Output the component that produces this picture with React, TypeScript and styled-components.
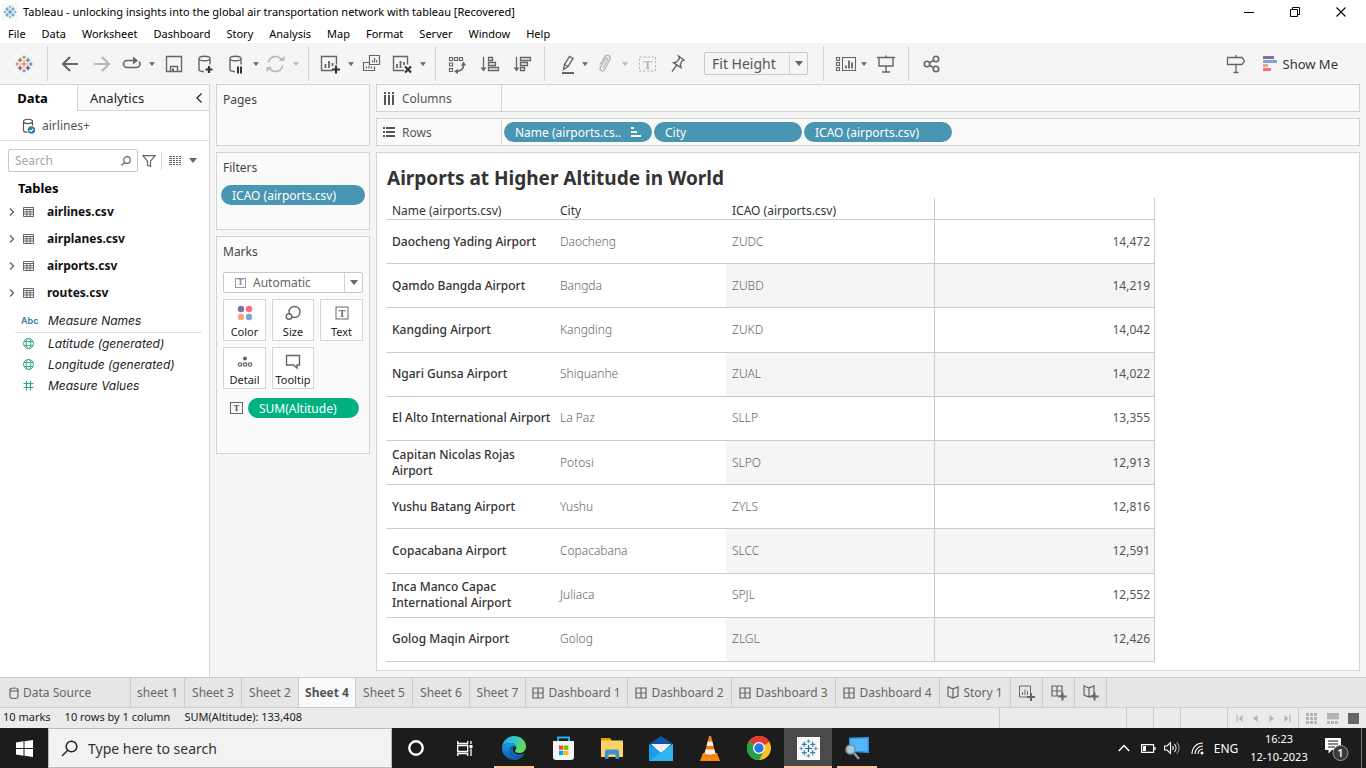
import React from "react";
import styled, { createGlobalStyle, css } from "styled-components";

const sys = `"Noto Sans", "Open Sans", sans-serif`;
const tab = `"Noto Sans", "Open Sans", sans-serif`;
const line = "#d4d4d4";
const teal = "#4996b2";

const GlobalStyle = createGlobalStyle`
  *, *::before, *::after { box-sizing: border-box; }
  body { margin: 0; background: #f5f5f5; font-family: ${tab}; font-size: 12px; color: #333; }
  button, input, select { font: inherit; color: inherit; margin: 0; padding: 0; border: 0; background: none; border-radius: 0; }
  h1, h2, ul { margin: 0; padding: 0; list-style: none; }
  svg { display: block; flex: none; }
`;

const Page = styled.div`
  min-height: 100vh;
  display: flex;
  flex-direction: column;
`;

/* ---------- window chrome ---------- */
const TitleBar = styled.header`
  display: flex;
  align-items: center;
  height: 23px;
  padding: 0 2px;
  background: #fff;
  font-family: ${sys};
  font-size: 11px;
  color: #000;
`;
const WindowTitle = styled.span`
  flex: 1;
  margin-left: 5px;
  white-space: nowrap;
`;
const WindowButton = styled.button`
  width: 46px;
  height: 23px;
  display: flex;
  align-items: center;
  justify-content: center;
`;
const MenuBar = styled.nav`
  display: flex;
  align-items: center;
  height: 20px;
  padding-left: 8px;
  gap: 16px;
  background: #fff;
  font-family: ${sys};
  font-size: 11px;
  color: #000;
`;
const Toolbar = styled.div`
  display: flex;
  align-items: center;
  height: 41px;
  color: #666;
`;
const ToolButton = styled.button<{ $w?: number; $off?: boolean }>`
  width: ${(p) => p.$w ?? 32}px;
  height: 32px;
  display: flex;
  flex: none;
  align-items: center;
  justify-content: center;
  color: ${(p) => (p.$off ? "#b8b8b8" : "#666")};
`;
const StartPageButton = styled(ToolButton)`
  width: 41px;
  padding-left: 6px;
`;
const ToolSep = styled.span`
  width: 1px;
  height: 35px;
  margin: 0 6px;
  background: ${line};
`;
const Spacer = styled.span`
  flex: 1;
`;
const ShowMe = styled.button`
  display: flex;
  align-items: center;
  gap: 6px;
  margin: 0 28px 0 11px;
  font-size: 13px;
  color: #333;
`;

const Combo = styled.div<{ $kind: "fit" | "mark" }>`
  display: grid;
  align-items: stretch;
  border: 1px solid #c8c8c8;
  border-radius: 2px;
  ${(p) =>
    p.$kind === "fit"
      ? css`
          width: 104px;
          height: 23px;
          margin: 0 9px;
          font-size: 14px;
          color: #555;
        `
      : css`
          height: 21px;
          background: #fff;
          font-size: 12px;
          color: #666;
        `}
  select {
    grid-area: 1 / 1;
    appearance: none;
    width: 100%;
    padding-left: ${(p) => (p.$kind === "fit" ? 7 : 29)}px;
  }
`;
const ComboIcon = styled.span`
  grid-area: 1 / 1;
  display: flex;
  align-items: center;
  padding-left: 11px;
  pointer-events: none;
`;
const ComboArrow = styled.span`
  grid-area: 1 / 1;
  justify-self: end;
  width: 18px;
  display: flex;
  align-items: center;
  justify-content: center;
  border-left: 1px solid ${line};
  color: #666;
  pointer-events: none;
`;

/* ---------- workspace ---------- */
const Workspace = styled.main`
  flex: 1;
  display: flex;
  align-items: stretch;
`;
const DataPane = styled.aside`
  width: 210px;
  flex: none;
  background: #fff;
  border-top: 1px solid ${line};
  border-right: 1px solid ${line};
`;
const PaneTabs = styled.div`
  display: flex;
  height: 26px;
`;
const PaneTab = styled.button<{ $active?: boolean }>`
  font-size: 13px;
  color: #222;
  ${(p) =>
    p.$active
      ? css`
          width: 78px;
          padding-right: 12px;
          font-weight: 700;
          color: #000;
          border-right: 1px solid ${line};
        `
      : css`
          flex: 1;
          display: flex;
          align-items: center;
          justify-content: space-between;
          padding: 0 6px 0 12px;
          background: #fafafa;
          border-bottom: 1px solid ${line};
        `}
`;
const SourceRow = styled.button`
  display: flex;
  align-items: center;
  gap: 6px;
  width: 100%;
  height: 30px;
  padding-left: 22px;
  color: #555;
  border-bottom: 1px solid #e2e2e2;
`;
const SearchRow = styled.div`
  display: flex;
  align-items: center;
  padding: 8px 8px 0;
  color: #666;
`;
const SearchBox = styled.label`
  display: flex;
  align-items: center;
  width: 130px;
  height: 23px;
  padding: 0 6px;
  border: 1px solid #c8c8c8;
  border-radius: 2px;
  input {
    flex: 1;
    min-width: 0;
    outline: 0;
  }
  input::placeholder {
    color: #a6a6a6;
    opacity: 1;
  }
`;
const SmallTool = styled.button<{ $w: number }>`
  width: ${(p) => p.$w}px;
  height: 20px;
  display: flex;
  align-items: center;
  justify-content: center;
`;
const ThinSep = styled.span`
  width: 1px;
  height: 18px;
  margin-left: 2px;
  background: ${line};
`;
const PaneHeading = styled.h2`
  padding: 6px 18px 0;
  font-size: 13px;
  line-height: 20px;
  font-weight: 700;
  color: #000;
`;
const TableList = styled.div`
  margin-bottom: 4px;
`;
const TableItem = styled.button`
  display: grid;
  grid-template-columns: 15px 24px 1fr;
  align-items: center;
  width: 100%;
  height: 27px;
  padding-left: 8px;
  text-align: left;
  font-weight: 700;
  color: #111;
  svg { color: #666; }
`;
const FieldItem = styled.button`
  display: grid;
  grid-template-columns: 28px 1fr;
  align-items: center;
  width: 100%;
  height: 21px;
  padding-left: 20px;
  text-align: left;
  font-family: Inter, ${tab};
  font-style: italic;
  color: #222;
`;
const FieldType = styled.span<{ $kind: "text" | "icon" }>`
  display: flex;
  padding-left: ${(p) => (p.$kind === "text" ? 1 : 3)}px;
  font-size: 9px;
  font-style: normal;
  font-weight: 600;
  color: ${(p) => (p.$kind === "text" ? "#3e7b96" : "#3aa981")};
`;
const FieldRule = styled.hr`
  margin: 1px 7px 0 15px;
  border: 0;
  border-top: 1px solid #e0e0e0;
`;

const Cards = styled.div`
  width: 154px;
  flex: none;
  margin-left: 6px;
  display: flex;
  flex-direction: column;
  gap: 6px;
`;
const Card = styled.section<{ $h: number }>`
  min-height: ${(p) => p.$h}px;
  padding: 6px;
  background: #fafafa;
  border: 1px solid ${line};
`;
const CardTitle = styled.h2`
  font-size: 12px;
  line-height: 18px;
  font-weight: 400;
  color: #444;
`;
const Pill = styled.button<{ $w: number; $green?: boolean }>`
  display: flex;
  align-items: center;
  justify-content: space-between;
  width: ${(p) => p.$w}px;
  height: 20px;
  flex: none;
  padding: 0 11px;
  border-radius: 10px;
  background: ${(p) => (p.$green ? "#00b180" : teal)};
  color: #fff;
  white-space: nowrap;
`;
const FilterSlot = styled.div`
  margin: 8px -2px 0;
`;
const MarksBody = styled.div`
  margin-top: 11px;
`;
const MarkGrid = styled.div`
  display: grid;
  grid-template-columns: 43px 42px 43px;
  gap: 6px;
  margin-top: 6px;
`;
const MarkButton = styled.button`
  height: 42px;
  display: flex;
  flex-direction: column;
  align-items: center;
  justify-content: space-between;
  padding-top: 4px;
  background: #fff;
  border: 1px solid ${line};
  font-size: 11px;
  line-height: 16px;
  color: #222;
  svg { color: #666; }
`;
const MarkField = styled.div`
  display: flex;
  align-items: center;
  gap: 5px;
  margin: 9px 0 0 7px;
  color: #666;
`;

const Sheet = styled.div`
  flex: 1;
  min-width: 0;
  display: flex;
  flex-direction: column;
  gap: 6px;
  padding: 0 6px 6px;
`;
const Shelf = styled.div`
  display: flex;
  align-items: center;
  gap: 2px;
  height: 28px;
  background: #fafafa;
  border: 1px solid ${line};
`;
const ShelfName = styled.div`
  display: flex;
  align-items: center;
  gap: 6px;
  width: 125px;
  height: 100%;
  padding-left: 6px;
  border-right: 1px solid ${line};
  color: #555;
`;
const View = styled.section`
  flex: 1;
  padding: 10px 9px 8px;
  background: #fff;
  border: 1px solid ${line};
`;
const ViewTitle = styled.h1`
  padding-left: 1px;
  font-size: 19px;
  line-height: 30px;
  font-weight: 700;
  color: #333;
`;
const Grid = styled.table`
  width: 769px;
  height: 464px;
  margin-top: 5px;
  table-layout: fixed;
  border-collapse: separate;
  border-spacing: 0;
  th, td {
    padding: 0 6px;
    text-align: left;
    font-weight: 400;
    line-height: 16px;
    border-bottom: 1px solid #ccc;
  }
  thead th { height: 22px; padding-top: 4px; color: #333; }
  tbody tr { height: 44px; }
  tbody th { padding-right: 0; font-weight: 500; color: #333; }
  td { color: #666; font-weight: 300; }
  th:nth-child(3), td:nth-child(3) { border-right: 1px solid #ccc; }
  th:nth-child(4), td:nth-child(4) { border-right: 1px solid #ccc; padding-right: 4px; text-align: right; color: #555; font-weight: 400; }
  tbody tr:nth-child(even) td:nth-child(n + 3) { background: #f5f5f5; }
`;

/* ---------- sheet tabs and status ---------- */
const SheetTabs = styled.nav`
  display: flex;
  height: 31px;
  background: #e6e6e6;
  border-top: 1px solid #ccc;
  border-bottom: 1px solid #ccc;
`;
const SheetTab = styled.button<{ $w: number; $active?: boolean; $first?: boolean }>`
  width: ${(p) => p.$w}px;
  display: flex;
  align-items: center;
  justify-content: ${(p) => (p.$first ? "flex-start" : "center")};
  gap: 4px;
  padding-left: ${(p) => (p.$first ? 9 : 0)}px;
  border-right: 1px solid #ccc;
  background: ${(p) => (p.$active ? "#fafafa" : "transparent")};
  font-weight: ${(p) => (p.$active ? 700 : 400)};
  color: ${(p) => (p.$active ? "#555" : "#666")};
  white-space: nowrap;
`;
const StatusBar = styled.footer`
  display: flex;
  align-items: center;
  height: 20px;
  padding-left: 3px;
  background: #ebebeb;
  font-size: 11px;
  color: #222;
`;
const StatusText = styled.span`
  margin-right: 14px;
  line-height: 18px;
  padding-bottom: 2px;
`;
const StatusCell = styled.div<{ $w: number }>`
  width: ${(p) => p.$w}px;
  height: 100%;
  display: flex;
  align-items: center;
  justify-content: center;
  gap: 9px;
  border-left: 1px solid #ccc;
  color: #b4b4b4;
`;

/* ---------- taskbar ---------- */
const Taskbar = styled.footer`
  display: flex;
  align-items: stretch;
  height: 40px;
  background: #1c1c1c;
  color: #fff;
  font-family: ${sys};
`;
const TaskButton = styled.button<{ $open?: boolean; $active?: boolean }>`
  width: 48px;
  margin-right: 1px;
  display: flex;
  align-items: center;
  justify-content: center;
  background: ${(p) =>
    p.$active
      ? "linear-gradient(#fcc4a0, #fcc4a0) bottom / 100% 2px no-repeat #4a4a4a"
      : p.$open
        ? "linear-gradient(#fcc4a0, #fcc4a0) bottom / 40px 2px no-repeat"
        : "none"};
`;
const StartButton = styled(TaskButton)`
  margin: 0;
`;
const TaskSearch = styled.label`
  display: flex;
  align-items: center;
  gap: 10px;
  width: 344px;
  padding-left: 12px;
  background: #f2f2f2;
  border: 1px solid #bbb;
  color: #222;
  font-size: 14px;
  input { flex: 1; outline: 0; }
  input::placeholder { color: #333; opacity: 1; }
`;
const TrayButton = styled.button<{ $w: number }>`
  width: ${(p) => p.$w}px;
  display: flex;
  align-items: center;
  justify-content: center;
  font-size: 12px;
`;
const Clock = styled.button`
  width: 74px;
  font-size: 11px;
  line-height: 18px;
`;
const Notify = styled.button`
  width: 46px;
  margin-right: 4px;
  border-right: 1px solid #777;
  display: flex;
  align-items: center;
  padding-left: 7px;
`;

/* ---------- drawings ---------- */
type IconProps = { w?: number; h?: number; sw?: number; children: React.ReactNode };
const Icon = ({ w = 32, h = 32, sw = 1.4, children }: IconProps) => (
  <svg width={w} height={h} viewBox={`0 0 ${w} ${h}`} fill="none" stroke="currentColor" strokeWidth={sw} aria-hidden="true">
    {children}
  </svg>
);
const Caret = ({ w = 6 }: { w?: number }) => (
  <svg width={w} height={w === 6 ? 4 : 5} viewBox="0 0 8 5" aria-hidden="true">
    <path d="M0 0h8L4 5z" fill="currentColor" />
  </svg>
);
const logoMarks: [number, number, number, string, string][] = [
  [10, 10, 3.6, "#e8762c", "#1f6a96"],
  [5.6, 5.6, 2.6, "#c8553d", "#3a82ab"],
  [14.4, 5.6, 2.6, "#59879b", "#3a82ab"],
  [5.6, 14.4, 2.6, "#c72035", "#3a82ab"],
  [14.4, 14.4, 2.6, "#1f447e", "#3a82ab"],
  [10, 2.4, 1.9, "#7199a6", "#5a9dc0"],
  [10, 17.6, 1.9, "#7f8fb0", "#5a9dc0"],
  [2.4, 10, 1.9, "#7199a6", "#5a9dc0"],
  [17.6, 10, 1.9, "#5b6591", "#5a9dc0"],
];
const TableauMark = ({ size, blue, plate }: { size: number; blue?: boolean; plate?: boolean }) => (
  <svg width={size} height={size} viewBox={plate ? "-2 -2 24 24" : "0 0 20 20"} aria-hidden="true">
    {plate && <rect x="-2" y="-2" width="24" height="24" fill="#f6f8fa" />}
    {logoMarks.map(([x, y, r, c, b]) => (
      <path key={`${x}-${y}`} d={`M${x - r} ${y}h${r * 2}M${x} ${y - r}v${r * 2}`} stroke={blue ? b : c} strokeWidth="1.3" />
    ))}
  </svg>
);
const TextMark = ({ w, h, faded }: { w: number; h: number; faded?: boolean }) => (
  <svg width={w} height={h} viewBox={`0 0 ${w} ${h}`} aria-hidden="true" opacity={faded ? 0.65 : 1}>
    <rect x="0.5" y="0.5" width={w - 1} height={h - 1} fill="none" stroke="#666" />
    <text x={w / 2} y={h - 3} textAnchor="middle" fontFamily="Liberation Serif, serif" fontWeight="700" fontSize="9" fill="#555">T</text>
  </svg>
);
const Cylinder = ({ x }: { x: number }) => (
  <path d={`M${x} 10.5c0-3 11-3 11 0s-11 3-11 0v11c0 1.5 2 2 5 2.2M${x + 11} 10.5v6`} />
);
const Plus = ({ x, y, r = 3.5 }: { x: number; y: number; r?: number }) => (
  <path d={`M${x - r} ${y}h${r * 2}M${x} ${y - r}v${r * 2}`} stroke="#333" strokeWidth="2.2" />
);
const Chevron = () => (
  <Icon w={7} h={10} sw={1.4}><path d="M2 1.5 5.5 5 2 8.500" /></Icon>
);
const TableIcon = () => (
  <Icon w={11} h={10} sw={1}><path d="M.5.5h10v9H.5zM.5 2.5h10M.5 4.800h10M.5 7h10M3.800 2.500v7M7.100 2.500v7" /></Icon>
);
const Globe = () => (
  <Icon w={11} h={11} sw={1}>
    <circle cx="5.5" cy="5.5" r="5" />
    <ellipse cx="5.5" cy="5.5" rx="2.3" ry="5" />
    <path d="M1 3.6h9M1 7.4h9" />
  </Icon>
);
const Hash = () => (
  <Icon w={11} h={11} sw={1.2}><path d="M3.5 1v9.500M7.500 1v9.500M.5 3.500h10M.5 7.500h10" /></Icon>
);
const DashIcon = ({ plus }: { plus?: boolean }) => (
  <Icon w={plus ? 16 : 12} h={plus ? 16 : 12} sw={1.2}>
    <path d="M1 1h10v10H1zM6 1v10M1 6h10" />
    {plus && <path d="M7.500 11.500h8M11.500 7.500v8" strokeWidth="2" />}
  </Icon>
);
const StoryIcon = ({ plus }: { plus?: boolean }) => (
  <Icon w={plus ? 16 : 12} h={plus ? 16 : 13} sw={1.2}>
    <path d="M6 3 1 1v9l5 2 5-2V1L6 3v9" />
    {plus && <path d="M7.500 11.500h8M11.500 7.500v8" strokeWidth="2" />}
  </Icon>
);
const SheetPlus = () => (
  <Icon w={16} h={16} sw={1}>
    <path d="M.5 1h11v11H.5zM3.500 10V7M6 10V4.500M8.500 10V6" />
    <path d="M8 12h8M12 8v8" strokeWidth="2" />
  </Icon>
);
const ToolCaret = ({ label, off }: { label: string; off?: boolean }) => (
  <ToolButton $w={12} $off={off} aria-label={label}><Caret /></ToolButton>
);

/* ---------- data ---------- */
const menus = ["File", "Data", "Worksheet", "Dashboard", "Story", "Analysis", "Map", "Format", "Server", "Window", "Help"];
const tables = ["airlines.csv", "airplanes.csv", "airports.csv", "routes.csv"];
const airports = [
  ["Daocheng Yading Airport", "Daocheng", "ZUDC", "14,472"],
  ["Qamdo Bangda Airport", "Bangda", "ZUBD", "14,219"],
  ["Kangding Airport", "Kangding", "ZUKD", "14,042"],
  ["Ngari Gunsa Airport", "Shiquanhe", "ZUAL", "14,022"],
  ["El Alto International Airport", "La Paz", "SLLP", "13,355"],
  ["Capitan Nicolas Rojas Airport", "Potosi", "SLPO", "12,913"],
  ["Yushu Batang Airport", "Yushu", "ZYLS", "12,816"],
  ["Copacabana Airport", "Copacabana", "SLCC", "12,591"],
  ["Inca Manco Capac International Airport", "Juliaca", "SPJL", "12,552"],
  ["Golog Maqin Airport", "Golog", "ZLGL", "12,426"],
];
const sheetTabs: [string, number][] = [
  ["sheet 1", 54], ["Sheet 3", 57], ["Sheet 2", 57], ["Sheet 4", 57], ["Sheet 5", 57], ["Sheet 6", 57], ["Sheet 7", 56],
];
const dashTabs: [string, number][] = [
  ["Dashboard 1", 102], ["Dashboard 2", 104], ["Dashboard 3", 104], ["Dashboard 4", 104],
];

const MainToolbar = () => (
  <Toolbar>
    <StartPageButton aria-label="Start page"><TableauMark size={18} /></StartPageButton>
    <ToolSep />
    <ToolButton aria-label="Undo"><Icon sw={2}><path d="M24 16H9M16 9l-7 7 7 7" /></Icon></ToolButton>
    <ToolButton $off aria-label="Redo"><Icon sw={2}><path d="M8 16h15M16 9l7 7-7 7" /></Icon></ToolButton>
    <ToolButton $w={28} aria-label="Replay">
      <Icon w={28} sw={1.6}>
        <path d="M16 12.500H9a3.500 3.500 0 0 0 0 7h9.500a3.500 3.500 0 0 0 3.500-3.500c0-1-.3-1.800-1-2.500" />
        <path d="M15 8.500l5 4-5 4z" fill="currentColor" stroke="none" />
      </Icon>
    </ToolButton>
    <ToolCaret label="Replay options" />
    <ToolButton aria-label="Save">
      <Icon><path d="M8.500 8.500h15v15h-15zM12.500 23.500v-5h7v5" /><path d="M14 20.500h2v3h-2z" fill="currentColor" stroke="none" /></Icon>
    </ToolButton>
    <ToolButton aria-label="New data source"><Icon><Cylinder x={9} /><Plus x={19} y={21.500} /></Icon></ToolButton>
    <ToolButton $w={28} aria-label="Pause auto updates">
      <Icon w={28}><Cylinder x={8} /><path d="M16 18.500v7M19 18.500v7" stroke="#333" strokeWidth="2" /></Icon>
    </ToolButton>
    <ToolCaret label="Auto update options" />
    <ToolButton $w={28} $off aria-label="Run update">
      <Icon w={28} sw={1.600}>
        <path d="M6.500 14.500a7 7 0 0 1 13-2.500M20.500 17.500a7 7 0 0 1-13 2.500" />
        <path d="M17 13h5.500V8zM10 19H4.500v5z" fill="currentColor" stroke="none" />
      </Icon>
    </ToolButton>
    <ToolCaret label="Update options" off />
    <ToolSep />
    <ToolButton $w={30} aria-label="New worksheet">
      <Icon w={30}>
        <path d="M17.500 22.500H6.500v-14h15v8" />
        <path d="M10.500 20v-4M14 20v-7M17.500 18v-3" strokeWidth="1.800" />
        <Plus x={21} y={21.500} r={4} />
      </Icon>
    </ToolButton>
    <ToolCaret label="New worksheet options" />
    <ToolButton aria-label="Duplicate">
      <Icon sw={1.200}>
        <path d="M12 14.500H6.500v8h11v-4M12.500 7.500h10v9h-10zM15.500 14.500v-2M17.500 14.500V10M19.500 14.500V12M9.500 20.500v-2M12 20.500v-3M14.500 20.500v-2" />
      </Icon>
    </ToolButton>
    <ToolButton $w={28} aria-label="Clear sheet">
      <Icon w={28}>
        <path d="M15 22.500H4.500v-14h14v8" />
        <path d="M8 20v-4M11.500 20v-7M15 17v-3" strokeWidth="1.800" />
        <path d="M16 18.500l6 6M22 18.500l-6 6" stroke="#333" strokeWidth="2.200" />
      </Icon>
    </ToolButton>
    <ToolCaret label="Clear options" />
    <ToolSep />
    <ToolButton aria-label="Swap rows and columns">
      <Icon sw={1.200}>
        <path d="M7.500 9.500h3v3h-3zM12.500 9.500h3v3h-3zM17.500 9.500h3v3h-3zM7.500 15h3v3h-3zM7.500 20.500h3v3h-3z" />
        <path d="M21.500 17c0 4-2 6-7 6.500" strokeWidth="1.600" />
        <path d="M21.500 13.500l2.700 4h-5.400zM12 23.500l4-2.700v5.200z" fill="currentColor" stroke="none" />
      </Icon>
    </ToolButton>
    <ToolButton aria-label="Sort ascending">
      <Icon sw={1.300}>
        <path d="M9.500 9v12M14.500 9.500h4v3h-4zM14.500 14.500h7v3h-7zM14.500 19.500h10v3h-10z" />
        <path d="M9.500 23.500l-3-4h6z" fill="currentColor" stroke="none" />
      </Icon>
    </ToolButton>
    <ToolButton aria-label="Sort descending">
      <Icon sw={1.300}>
        <path d="M10.500 9v12M14.500 9.500h10v3h-10zM14.500 14.500h7v3h-7zM14.500 19.500h4v3h-4z" />
        <path d="M10.500 23.500l-3-4h6z" fill="currentColor" stroke="none" />
      </Icon>
    </ToolButton>
    <ToolSep />
    <ToolButton $w={28} aria-label="Highlight">
      <Icon w={28}>
        <path d="M12.500 21.500l1-5 5-8 3.500 2-5 8zM13.500 16.500l3.500 2" />
        <path d="M11 25h12" strokeWidth="2" />
      </Icon>
    </ToolButton>
    <ToolCaret label="Highlight options" />
    <ToolButton $w={28} $off aria-label="Group members">
      <Icon w={28}>
        <path d="M12 20l4.500-8c1-1.800-1.200-3-2.200-1.200L9.500 19c-1.500 3 2 5.500 4 2.500l5.300-9.500c2-4-3-6.500-5-3.200L9 16.500" />
      </Icon>
    </ToolButton>
    <ToolCaret label="Group options" off />
    <ToolButton $off aria-label="Show mark labels">
      <Icon>
        <rect x="8.500" y="9" width="16" height="14" strokeDasharray="2.500 1.500" strokeWidth="1" />
        <text x="16.500" y="20.500" textAnchor="middle" fontFamily="Liberation Serif, serif" fontWeight="700" fontSize="13" fill="currentColor" stroke="none">T</text>
      </Icon>
    </ToolButton>
    <ToolButton aria-label="Fix axes">
      <Icon><path d="M15.500 8l5.500 4-2 .8-1.500 3.700.5 3.200-7.500-5 3-.8 3-3.200zM13.500 17.500L9 23.500" /></Icon>
    </ToolButton>
    <Combo $kind="fit">
      <select aria-label="Fit"><option>Fit Height</option></select>
      <ComboArrow><Caret w={8} /></ComboArrow>
    </Combo>
    <ToolSep />
    <ToolButton $w={28} aria-label="Show/hide cards">
      <Icon w={28}>
        <path d="M6.500 9.500h3v3h-3zM6.500 14.500h3v3h-3zM6.500 19.500h3v3h-3zM12.500 9.500h13v13h-13z" strokeWidth="1.100" />
        <path d="M16 20.500v-3M19 20.500v-8M22 20.500v-6" strokeWidth="1.800" />
      </Icon>
    </ToolButton>
    <ToolCaret label="Card options" />
    <ToolButton aria-label="Presentation mode">
      <Icon><path d="M7 9.500h18M9 9.500v8.500h14V9.500M16 7.500v2M16 18v6M12 24h8" /></Icon>
    </ToolButton>
    <ToolSep />
    <ToolButton aria-label="Share">
      <Icon sw={1.600}><circle cx="12" cy="16" r="2.700" /><circle cx="21" cy="11" r="2.700" /><circle cx="21" cy="21" r="2.700" /><path d="M14.500 14.700l4-2.300M14.500 17.300l4 2.300" /></Icon>
    </ToolButton>
    <Spacer />
    <ToolButton aria-label="Guide">
      <Icon sw={1.300}><path d="M7.500 9.500h14.500l2.500 3.500-2.500 3.500H7.500zM16 7v2.500M16 16.500V24M13.500 24.500h5" /></Icon>
    </ToolButton>
    <ShowMe>
      <svg width="14" height="15" viewBox="0 0 14 15" aria-hidden="true">
        <path d="M0 0h11v3H0z" fill="#85709c" /><path d="M0 4h14v3H0z" fill="#7ea4cf" />
        <path d="M0 8h5v3H0z" fill="#f4a582" /><path d="M0 12h8v3H0z" fill="#fb6b80" />
      </svg>
      Show Me
    </ShowMe>
  </Toolbar>
);

const DataSide = () => (
  <DataPane>
    <PaneTabs>
      <PaneTab $active>Data</PaneTab>
      <PaneTab>Analytics<Icon w={8} h={12} sw={1.200}><path d="M6.500 1.500 2 6l4.500 4.500" /></Icon></PaneTab>
    </PaneTabs>
    <SourceRow>
      <Icon w={14} h={16} sw={1.200}>
        <path d="M1.500 3.500c0-3 9-3 9 0s-9 2.500-9 0v9c0 1 1.500 1.700 4 1.800M10.500 3.500v4" />
        <circle cx="9.500" cy="12" r="3.700" fill="#2f7f9f" stroke="none" />
        <path d="M7.700 12l1.300 1.400 2.300-2.600" stroke="#fff" />
      </Icon>
      airlines+
    </SourceRow>
    <SearchRow>
      <SearchBox>
        <input type="text" placeholder="Search" aria-label="Search fields" />
        <Icon w={10} h={10} sw={1.200}><circle cx="6" cy="4" r="3.300" /><path d="M3.500 6.500.5 9.500" /></Icon>
      </SearchBox>
      <SmallTool $w={21} aria-label="Filter fields"><Icon w={14} h={12} sw={1.200}><path d="M1 .7h12L8.500 6.200v5l-3-1v-4z" /></Icon></SmallTool>
      <ThinSep />
      <SmallTool $w={25} aria-label="View as list">
        <Icon w={12} h={11} sw={1}><path d="M0 1.500h12M0 3.500h12M0 5.500h12M0 7.500h12M0 9.500h12" strokeDasharray="3 1 2 1 2 1 2 0" /></Icon>
      </SmallTool>
      <SmallTool $w={12} aria-label="List options"><Caret w={8} /></SmallTool>
    </SearchRow>
    <PaneHeading>Tables</PaneHeading>
    <TableList>
      {tables.map((t) => (
        <TableItem key={t}><Chevron /><TableIcon />{t}</TableItem>
      ))}
    </TableList>
    <FieldItem><FieldType $kind="text">Abc</FieldType>Measure Names</FieldItem>
    <FieldRule />
    <FieldItem><FieldType $kind="icon"><Globe /></FieldType>Latitude (generated)</FieldItem>
    <FieldItem><FieldType $kind="icon"><Globe /></FieldType>Longitude (generated)</FieldItem>
    <FieldItem><FieldType $kind="icon"><Hash /></FieldType>Measure Values</FieldItem>
  </DataPane>
);

const CardColumn = () => (
  <Cards>
    <Card $h={62}><CardTitle>Pages</CardTitle></Card>
    <Card $h={78}>
      <CardTitle>Filters</CardTitle>
      <FilterSlot><Pill $w={144}>ICAO (airports.csv)</Pill></FilterSlot>
    </Card>
    <Card $h={218}>
      <CardTitle>Marks</CardTitle>
      <MarksBody>
        <Combo $kind="mark">
          <select aria-label="Mark type"><option>Automatic</option></select>
          <ComboIcon><TextMark w={11} h={10} faded /></ComboIcon>
          <ComboArrow><Caret w={8} /></ComboArrow>
        </Combo>
        <MarkGrid>
          <MarkButton>
            <svg width="18" height="18" viewBox="0 0 18 18" aria-hidden="true">
              <circle cx="5" cy="5" r="3.200" fill="#85709c" /><circle cx="13" cy="5" r="3.200" fill="#fb6b80" />
              <circle cx="5" cy="13" r="3.200" fill="#f4a582" /><circle cx="13" cy="13" r="3.200" fill="#7ea4cf" />
            </svg>
            Color
          </MarkButton>
          <MarkButton><Icon w={18} h={18}><circle cx="10.500" cy="8" r="5.500" /><circle cx="5" cy="12.500" r="2.800" fill="#fff" /></Icon>Size</MarkButton>
          <MarkButton><Icon w={18} h={18} sw={1}>
            <rect x="3" y="3" width="12" height="12" />
            <text x="9" y="12.500" textAnchor="middle" fontFamily="Liberation Serif, serif" fontWeight="700" fontSize="10" fill="currentColor" stroke="none">T</text>
          </Icon>Text</MarkButton>
          <MarkButton><Icon w={18} h={18} sw={1.200}><circle cx="9" cy="6.500" r="2" fill="currentColor" stroke="none" /><circle cx="4" cy="12.500" r="1.700" /><circle cx="9" cy="12.500" r="1.700" /><circle cx="14" cy="12.500" r="1.700" /></Icon>Detail</MarkButton>
          <MarkButton><Icon w={18} h={18}><path d="M2.500 3.500h13v9.500h-2.500v3l-3.500-3h-7z" /></Icon>Tooltip</MarkButton>
        </MarkGrid>
        <MarkField><TextMark w={13} h={12} /><Pill $w={111} $green>SUM(Altitude)</Pill></MarkField>
      </MarksBody>
    </Card>
  </Cards>
);

const SheetArea = () => (
  <Sheet>
    <Shelf>
      <ShelfName>
        <Icon w={13} h={13} sw={2}><path d="M2 0v2M6 0v2M10 0v2M2 3v10M6 3v10M10 3v10" /></Icon>Columns
      </ShelfName>
    </Shelf>
    <Shelf>
      <ShelfName>
        <Icon w={13} h={13} sw={2}><path d="M0 2h2M0 6h2M0 10h2M3 2h9M3 6h9M3 10h9" /></Icon>Rows
      </ShelfName>
      <Pill $w={148}>
        Name (airports.cs..
        <Icon w={10} h={12} sw={2}><path d="M0 2h3M0 6h6M0 10h10" /></Icon>
      </Pill>
      <Pill $w={148}>City</Pill>
      <Pill $w={148}>ICAO (airports.csv)</Pill>
    </Shelf>
    <View>
      <ViewTitle>Airports at Higher Altitude in World</ViewTitle>
      <Grid>
        <colgroup><col width="168" /><col width="172" /><col width="209" /><col width="220" /></colgroup>
        <thead>
          <tr><th>Name (airports.csv)</th><th>City</th><th>ICAO (airports.csv)</th><th aria-label="Altitude" /></tr>
        </thead>
        <tbody>
          {airports.map(([name, city, icao, alt]) => (
            <tr key={icao}><th scope="row">{name}</th><td>{city}</td><td>{icao}</td><td>{alt}</td></tr>
          ))}
        </tbody>
      </Grid>
    </View>
  </Sheet>
);

const WindowsTaskbar = () => (
  <Taskbar>
    <StartButton aria-label="Start">
      <svg width="17" height="17" viewBox="0 0 17 17" fill="#fff" aria-hidden="true">
        <path d="M0 2.400 7.500 1.300v6.700H0zM8.500 1.200 17 0v8H8.500zM0 9h7.500v6.700L0 14.600zM8.500 9H17v8l-8.500-1.200z" />
      </svg>
    </StartButton>
    <TaskSearch>
      <Icon w={17} h={17} sw={1.500}><circle cx="10.500" cy="6.500" r="5.300" /><path d="M6.500 10.500 1 16" /></Icon>
      <input type="text" placeholder="Type here to search" aria-label="Type here to search" />
    </TaskSearch>
    <TaskButton aria-label="Cortana"><Icon w={18} h={18} sw={2.400}><circle cx="9" cy="9" r="6.700" /></Icon></TaskButton>
    <TaskButton aria-label="Task view">
      <Icon w={16} h={16} sw={1.300}><path d="M.7 1v2.500h10V1M.7 5.500h10v6h-10zM.7 16v-2.500h10V16M14 1v3M14 8.500V16" /><path d="M12.500 5h3v3h-3z" fill="currentColor" stroke="none" /></Icon>
    </TaskButton>
    <TaskButton $open aria-label="Microsoft Edge">
      <svg width="24" height="24" viewBox="0 0 24 24" aria-hidden="true">
        <defs>
          <linearGradient id="edgeTop" x1="0" y1="0" x2="1" y2="0.400"><stop offset="0" stopColor="#2aa6e8" /><stop offset=".5" stopColor="#2fc6d4" /><stop offset="1" stopColor="#66dd51" /></linearGradient>
          <linearGradient id="edgeLow" x1="0" y1="0" x2="0" y2="1"><stop offset="0" stopColor="#1d9de6" /><stop offset="1" stopColor="#0c59a4" /></linearGradient>
        </defs>
        <path d="M0 11C1 4.500 6 0 12 0c7 0 12 5 12 10.500 0 4-3 6.500-6.500 6.500-3 0-4.500-1-4.500-2s1.300-1.500 1.300-3.500c0-2.500-2.500-4.500-6-4.500C4.500 7 1.500 8.500 0 11z" fill="url(#edgeTop)" />
        <path d="M0 11c2-3 5-4 8.300-4 3.500 0 6 2 6 4.500-1-2-5.300-2-6.300 1.500-1 4 3 8.500 8 8.200 2.500-.2 4.500-1.200 6-2.700C20 22 16.500 24 12 24 5 24-.5 18.500 0 11z" fill="url(#edgeLow)" />
        <path d="M8 13c-1 4 3 8.500 8 8.200 2.500-.2 4.500-1.200 6-2.700.5-.8 0-1.400-.8-1-4.200 2.300-10.200.5-10.200-4.500 0-1.200.6-2 1-2.300-1.700 0-3.500.8-4 2.300z" fill="#1464ae" />
      </svg>
    </TaskButton>
    <TaskButton aria-label="Microsoft Store">
      <svg width="23" height="24" viewBox="0 0 23 24" aria-hidden="true">
        <path d="M6 6V1.500h11V6" fill="none" stroke="#28a8ea" strokeWidth="2" />
        <path d="M1 5h21v16a3 3 0 0 1-3 3H4a3 3 0 0 1-3-3z" fill="#f5f5f5" />
        <path d="M7 9.500h4.300v4.300H7z" fill="#f25022" /><path d="M12 9.500h4.300v4.300H12z" fill="#7fba00" />
        <path d="M7 14.800h4.300v4.300H7z" fill="#00a4ef" /><path d="M12 14.800h4.300v4.300H12z" fill="#ffb900" />
      </svg>
    </TaskButton>
    <TaskButton aria-label="File Explorer">
      <svg width="22" height="21" viewBox="0 0 22 21" aria-hidden="true">
        <path d="M0 0h9l2 3H0z" fill="#e8a000" /><path d="M0 2.500h22V19H0z" fill="#fcd462" />
        <path d="M4 21v-7.500a2 2 0 0 1 2-2h10a2 2 0 0 1 2 2V21h-3.500v-4.500h-7V21z" fill="#3a8fd8" />
      </svg>
    </TaskButton>
    <TaskButton aria-label="Mail">
      <svg width="24" height="25" viewBox="0 0 24 25" aria-hidden="true">
        <path d="M0 8 12 0l12 8v4H0z" fill="#0a56a8" /><path d="M2 8h20L12 18z" fill="#f2f2f2" />
        <path d="M0 8v17h24V8L12 16.500z" fill="#1b9de8" /><path d="M0 25 24 8v17z" fill="#38c0f4" opacity=".7" />
      </svg>
    </TaskButton>
    <TaskButton aria-label="VLC media player">
      <svg width="20" height="25" viewBox="0 0 20 25" aria-hidden="true">
        <path d="M3 17h14l3 8H0z" fill="#f58a0a" /><path d="M9 0h2l5 20c-3 2-9 2-12 0z" fill="#f08010" />
        <path d="M7.700 5.500h4.600l1.200 4.500h-7zM5.500 13.500h9l1 4c-3 1.500-8 1.500-11 0z" fill="#f3eee8" />
      </svg>
    </TaskButton>
    <TaskButton aria-label="Google Chrome">
      <svg width="24" height="24" viewBox="0 0 24 24" aria-hidden="true">
        <circle cx="12" cy="12" r="12" fill="#fcc31e" />
        <path d="M12 12 1.600 6A12 12 0 0 1 22.400 6z" fill="#e33b2e" />
        <path d="M12 12 1.600 6A12 12 0 0 0 12 24l5.200-9z" fill="#22a04a" />
        <path d="M12 6h10.400A12 12 0 0 0 12 0z" fill="#e33b2e" />
        <circle cx="12" cy="12" r="6" fill="#fff" /><circle cx="12" cy="12" r="4.700" fill="#2f73e8" />
      </svg>
    </TaskButton>
    <TaskButton $open $active aria-label="Tableau"><TableauMark size={23} blue plate /></TaskButton>
    <TaskButton $open aria-label="Magnifier">
      <svg width="24" height="24" viewBox="0 0 24 24" aria-hidden="true">
        <path d="M4 1.500 24 1v16L4 16z" fill="#2b94e0" /><path d="M5.500 3 22.500 2.500v13l-17-1z" fill="#53b8fa" />
        <circle cx="5.500" cy="13.500" r="4.500" fill="#a9c9dc" stroke="#7890a0" strokeWidth="1.500" />
        <path d="M9 17l5 6" stroke="#8a98a2" strokeWidth="2.500" />
      </svg>
    </TaskButton>
    <Spacer />
    <TrayButton $w={24} aria-label="Show hidden icons"><Icon w={12} h={8} sw={1.500}><path d="M.8 7 6 1.500 11.200 7" /></Icon></TrayButton>
    <TrayButton $w={24} aria-label="Battery">
      <Icon w={15} h={9} sw={1.200}><path d="M.6.600h12v7.800H.6zM14 3v3" /><path d="M2 2h3v5H2z" fill="currentColor" stroke="none" /></Icon>
    </TrayButton>
    <TrayButton $w={24} aria-label="Volume">
      <Icon w={16} h={14} sw={1.100}><path d="M.6 5h2.500l3.400-3.500v11L3.100 9H.6zM8.500 5c1 1.200 1 2.800 0 4M10.500 3.200c2 2.200 2 5.400 0 7.600" /><path d="M12.800 1.500c3 3 3 8 0 11" opacity=".5" /></Icon>
    </TrayButton>
    <TrayButton $w={26} aria-label="Network">
      <Icon w={13} h={13} sw={1.100}><path d="M1 12C1 5.500 5.500 1 12 1M4 12c0-4.500 3.500-8 8-8M7 12c0-3 2-5 5-5" /><circle cx="11" cy="11" r="1.500" fill="currentColor" stroke="none" /></Icon>
    </TrayButton>
    <TrayButton $w={32}>ENG</TrayButton>
    <Clock>16:23<br />12-10-2023</Clock>
    <Notify aria-label="1 new notification">
      <svg width="26" height="26" viewBox="0 0 26 26" aria-hidden="true">
        <path d="M2 3h16v12H9l-3.500 3.500V15H2z" fill="#fff" />
        <path d="M5 6h10M5 9h10M5 12h7" stroke="#1c1c1c" />
        <circle cx="17.500" cy="18" r="7.500" fill="#3a3a3a" stroke="#999" />
        <text x="17.500" y="22" textAnchor="middle" fontFamily="Open Sans, sans-serif" fontSize="11" fontWeight="600" fill="#fff">1</text>
      </svg>
    </Notify>
  </Taskbar>
);

export default function App() {
  return (
    <Page>
      <GlobalStyle />
      <TitleBar>
        <TableauMark size={16} blue plate />
        <WindowTitle>Tableau - unlocking insights into the global air transportation network with tableau [Recovered]</WindowTitle>
        <WindowButton aria-label="Minimize"><Icon w={10} h={10} sw={1}><path d="M0 5.500h10" /></Icon></WindowButton>
        <WindowButton aria-label="Restore"><Icon w={10} h={10} sw={1}><path d="M.5 2.500h7v7h-7zM2.500 2.500v-2h7v7h-2" /></Icon></WindowButton>
        <WindowButton aria-label="Close"><Icon w={10} h={10} sw={1.100}><path d="M.5.5l9 9M9.500.5l-9 9" /></Icon></WindowButton>
      </TitleBar>
      <MenuBar>{menus.map((m) => <button key={m}>{m}</button>)}</MenuBar>
      <MainToolbar />
      <Workspace>
        <DataSide />
        <CardColumn />
        <SheetArea />
      </Workspace>
      <SheetTabs>
        <SheetTab $w={131} $first>
          <Icon w={10} h={12} sw={1.200}><path d="M1 2.500c0-2 8-2 8 0v7.500c0 2-8 2-8 0zM1 2.500c0 2 8 2 8 0" /></Icon>
          Data Source
        </SheetTab>
        {sheetTabs.map(([t, w]) => <SheetTab key={t} $w={w} $active={t === "Sheet 4"}>{t}</SheetTab>)}
        {dashTabs.map(([t, w]) => <SheetTab key={t} $w={w}><DashIcon />{t}</SheetTab>)}
        <SheetTab $w={71}><StoryIcon />Story 1</SheetTab>
        <SheetTab $w={32} aria-label="New worksheet"><SheetPlus /></SheetTab>
        <SheetTab $w={32} aria-label="New dashboard"><DashIcon plus /></SheetTab>
        <SheetTab $w={32} aria-label="New story"><StoryIcon plus /></SheetTab>
      </SheetTabs>
      <StatusBar>
        <StatusText>10 marks</StatusText>
        <StatusText>10 rows by 1 column</StatusText>
        <StatusText>SUM(Altitude): 133,408</StatusText>
        <Spacer />
        <StatusCell $w={127} />
        <StatusCell $w={27} />
        <StatusCell $w={27} />
        <StatusCell $w={47} />
        <StatusCell $w={71}>
          <Icon w={7} h={7} sw={1.200}><path d="M1 0v7" /><path d="M6.500 0v7L2.500 3.500z" fill="currentColor" stroke="none" /></Icon>
          <Icon w={7} h={7}><path d="M5.500 0v7L1 3.500z" fill="currentColor" stroke="none" /></Icon>
          <Icon w={7} h={7}><path d="M1.500 0v7L6 3.500z" fill="currentColor" stroke="none" /></Icon>
          <Icon w={7} h={7} sw={1.200}><path d="M6 0v7" /><path d="M.5 0v7l4-3.500z" fill="currentColor" stroke="none" /></Icon>
        </StatusCell>
        <StatusCell $w={68}>
          <Icon w={12} h={11} sw={3}><path d="M0 1.500h12M0 5.500h12M0 9.500h12" strokeDasharray="3 1" /></Icon>
          <Icon w={12} h={11} sw={3}><path d="M0 3.200h12" strokeWidth="6.400" /><path d="M0 9.500h12" strokeDasharray="3 1" /></Icon>
          <svg width="11" height="11" aria-hidden="true"><rect width="11" height="11" fill="#666" /></svg>
        </StatusCell>
      </StatusBar>
      <WindowsTaskbar />
    </Page>
  );
}
